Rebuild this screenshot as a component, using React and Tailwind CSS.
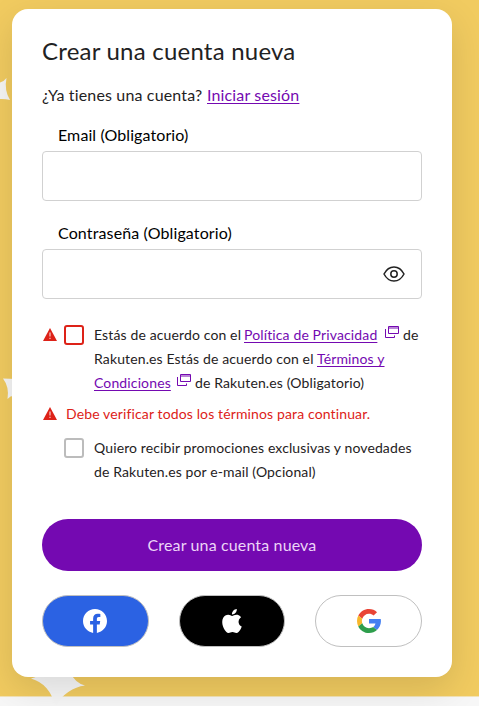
import React from 'react';

const linkClass = 'text-[#7409b1] underline decoration-1 underline-offset-2';

function Warning({ className }) {
  return (
    <svg className={className} width="14" height="13" viewBox="0 0 14 13">
      <path d="M7 0 L14 13 H0 Z" fill="#dd2218" />
      <path d="M7 4.500 V8.600 M7 9.700 V11" stroke="#fff" strokeOpacity="0.7" strokeWidth="1.300" />
    </svg>
  );
}

function NewWindow({ className }) {
  return (
    <svg className={className} width="14" height="12" viewBox="0 0 14 12" fill="none" stroke="#7409b1">
      <path d="M3.500 0.500 H13.500 V7.500 H3.500 Z M3.500 2 H13.500" />
      <path d="M0.500 3 V11.500 H9.500 V9.500" />
    </svg>
  );
}

function Eye() {
  return (
    <svg width="22" height="16" viewBox="0 0 22 16" fill="none" stroke="#222" strokeWidth="1.500">
      <path d="M1 8 C3.500 3.200 7 1 11 1 S18.500 3.200 21 8 C18.500 12.800 15 15 11 15 S3.500 12.800 1 8 Z" />
      <circle cx="11" cy="8" r="3.200" />
    </svg>
  );
}

function Sparkles() {
  return (
    <svg className="absolute left-0 top-0" width="479" height="706" viewBox="0 0 479 706" fill="#f6f6f6">
      <path d="M0 82.500 Q4.500 81 6.500 78 Q4 90 10 100 Q5 98.700 0 99 Z" />
      <path d="M3 378.500 L16 379 V396 Q11 395 7.500 399 Q9.500 387 3 378.500 Z" />
      <path d="M31 678.500 Q38 677 42 672 L70 672 Q75 683 85 685.500 Q67 688 55 706 Q50 684 31 678.500 Z" />
    </svg>
  );
}

function Facebook() {
  return (
    <svg width="24" height="24" viewBox="0 0 24 24">
      <path fill="#fff" d="M24 12.073c0-6.627-5.373-12-12-12s-12 5.373-12 12c0 5.990 4.388 10.954 10.125 11.854v-8.385H7.078v-3.470h3.047V9.430c0-3.007 1.792-4.669 4.533-4.669 1.312 0 2.686.235 2.686.235v2.953H15.830c-1.491 0-1.956.925-1.956 1.874v2.250h3.328l-.532 3.470h-2.796v8.385C19.612 23.027 24 18.062 24 12.073z" />
    </svg>
  );
}

function Apple() {
  return (
    <svg width="24" height="24" viewBox="0 0 24 24">
      <path fill="#fff" d="M12.152 6.896c-.948 0-2.415-1.078-3.960-1.040-2.040.027-3.910 1.183-4.961 3.014-2.117 3.675-.546 9.103 1.519 12.090 1.013 1.454 2.208 3.090 3.792 3.039 1.520-.065 2.090-.987 3.935-.987 1.831 0 2.350.987 3.960.948 1.637-.026 2.676-1.480 3.676-2.948 1.156-1.688 1.636-3.325 1.662-3.415-.039-.013-3.182-1.221-3.220-4.857-.026-3.040 2.480-4.494 2.597-4.559-1.429-2.090-3.623-2.324-4.390-2.376-2-.156-3.675 1.090-4.610 1.090zM15.530 3.830c.843-1.012 1.400-2.427 1.245-3.830-1.207.052-2.662.805-3.532 1.818-.780.896-1.454 2.338-1.273 3.714 1.338.104 2.715-.688 3.559-1.701" />
    </svg>
  );
}

function Google() {
  return (
    <svg width="24" height="24" viewBox="0 0 48 48">
      <path fill="#E94435" d="M24 9.500c3.540 0 6.710 1.220 9.210 3.600l6.850-6.850C35.900 2.380 30.470 0 24 0 14.620 0 6.510 5.380 2.560 13.220l7.980 6.190C12.430 13.720 17.740 9.500 24 9.500z" />
      <path fill="#4480F2" d="M47.500 19.800H24v9.220h12.940c-.58 2.960-2.260 5.480-4.780 7.180l7.730 6c4.510-4.180 8-10.360 8-17.650 0-1.570-.15-3.300-.39-4.750z" />
      <path fill="#F8B72C" d="M10.530 28.590c-.48-1.450-.76-2.990-.76-4.590s.27-3.140.76-4.590l-7.980-6.190C.92 16.460 0 20.120 0 24c0 3.880.92 7.540 2.560 10.780l7.970-6.190z" />
      <path fill="#2E9E4C" d="M24 48c6.480 0 11.930-2.130 15.890-5.810l-7.730-6c-2.150 1.450-4.920 2.300-8.160 2.300-6.260 0-11.570-4.220-13.470-9.910l-7.980 6.190C6.510 42.620 14.620 48 24 48z" />
    </svg>
  );
}

export default function App() {
  return (
    <div className="relative h-[706px] w-[479px] overflow-hidden bg-[#f7f7f7] font-['Lato','Noto_Sans',sans-serif] text-[#1f2223]">
      <div className="h-[697px] border-b border-[#f3e3b5] bg-[#f1cb60]" />
      <Sparkles />

      <main className="absolute left-3 top-[9px] flex h-[668px] w-[440px] flex-col rounded-2xl bg-white px-[30px] whitespace-nowrap shadow-[0_12px_36px_rgba(0,0,0,0.12)]">
        <h1 className="mt-[26px] text-[24px] leading-8 tracking-[0.22px]">Crear una cuenta nueva</h1>
        <p className="mt-4 flex h-6 text-base leading-6">
          <span className="w-[165px] tracking-[0.16px]">¿Ya tienes una cuenta?</span>
          <a className={`${linkClass} tracking-[0.15px]`}>Iniciar sesión</a>
        </p>

        <label className="mt-4 pl-4 text-base leading-6 tracking-[0.1px] text-black">Email (Obligatorio)</label>
        <div className="mt-1 h-[50px] rounded border border-[#d1d1d1]" />
        <label className="mt-5 pl-4 text-base leading-6 tracking-[0.13px] text-black">Contraseña (Obligatorio)</label>
        <div className="mt-1 flex h-[50px] items-center justify-end rounded border border-[#d1d1d1] pr-4">
          <Eye />
        </div>

        <div className="mt-6 flex text-sm leading-6 tracking-[0.13px]">
          <Warning className="mt-[5px] ml-[1px] mr-[7px]" />
          <span className="mt-[2px] mr-[10px] size-5 rounded-[3px] border-2 border-[#dd2218]" />
          <div>
            <div className="flex">
              <span className="w-[150px]">Estás de acuerdo con el</span>
              <a className={`${linkClass} w-[134px]`}>Política de Privacidad</a>
              <NewWindow className="mt-[3px] ml-[7px] mr-1" />
              <span>de</span>
            </div>
            <div className="flex">
              <span className="w-[223px]">Rakuten.es Estás de acuerdo con el</span>
              <a className={linkClass}>Términos y</a>
            </div>
            <div className="flex">
              <a className={`${linkClass} w-[77px]`}>Condiciones</a>
              <NewWindow className="mt-[3px] ml-[6px] mr-1" />
              <span>de Rakuten.es (Obligatorio)</span>
            </div>
          </div>
        </div>

        <div className="mt-[7px] flex text-sm leading-6 tracking-[0.13px] text-[#dd2218]">
          <Warning className="mt-[5px] ml-[1px] mr-[9px]" />
          <span>Debe verificar todos los términos para continuar.</span>
        </div>

        <div className="mt-[10px] flex pl-[22px] text-sm leading-6 tracking-[0.12px]">
          <span className="mt-[2px] mr-[10px] size-5 rounded-[3px] border-2 border-[#bcbcbc]" />
          <div>
            <div>Quiero recibir promociones exclusivas y novedades</div>
            <div>de Rakuten.es por e-mail (Opcional)</div>
          </div>
        </div>

        <button className="mt-[35px] h-[52px] rounded-full bg-[#7409b1] text-base tracking-[0.14px] text-[#ecd5f7]">Crear una cuenta nueva</button>

        <div className="mt-6 flex justify-between">
          <button className="flex h-[52px] w-[107px] items-center justify-center rounded-full border border-[#c0c0c0] bg-[#2b62e3] pr-[2px]"><Facebook /></button>
          <button className="flex h-[52px] w-[106px] items-center justify-center rounded-full border border-[#c0c0c0] bg-black"><Apple /></button>
          <button className="flex h-[52px] w-[107px] items-center justify-center rounded-full border border-[#c0c0c0] bg-white"><Google /></button>
        </div>
      </main>
    </div>
  );
}
